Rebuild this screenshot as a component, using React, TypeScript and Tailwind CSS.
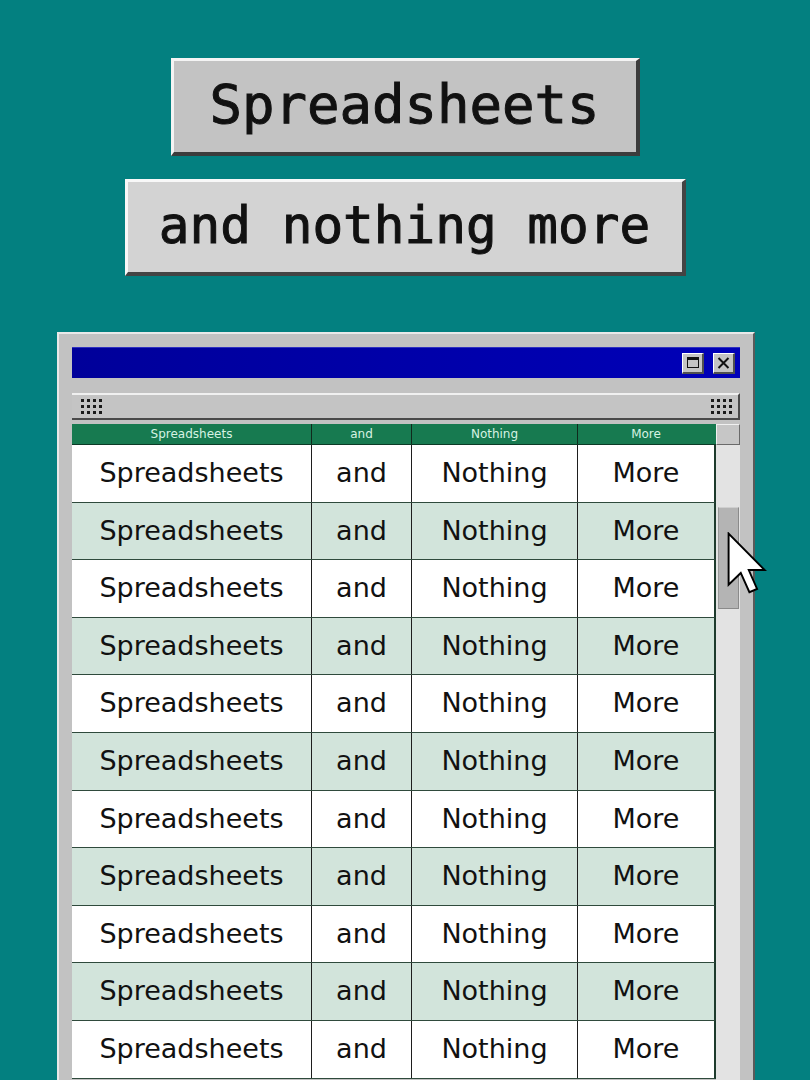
import React from "react";

const COLS = [
  { label: "Spreadsheets", w: "w-[240px]" },
  { label: "and", w: "w-[100px]" },
  { label: "Nothing", w: "w-[166px]" },
  { label: "More", w: "w-[136px]" },
];

const ROWS = Array.from({ length: 11 }, (_, i) => i);

function Grip() {
  return (
    <div className="grid grid-cols-4 gap-x-[3px] gap-y-[3px]">
      {Array.from({ length: 12 }, (_, i) => (
        <div key={i} className="w-[3px] h-[3px] bg-[#1a1a1a]" />
      ))}
    </div>
  );
}

function TitleButton({ children }: { children: React.ReactNode }) {
  return (
    <div className="w-[22px] h-[21px] bg-[#c4c4c4] border-t border-l border-t-white border-l-white border-r-2 border-b-2 border-r-[#505050] border-b-[#505050] flex items-center justify-center">
      {children}
    </div>
  );
}

function Cursor() {
  return (
    <svg
      className="absolute left-[727px] top-[532px]"
      width="40"
      height="64"
      viewBox="0 0 12.5 20"
    >
      <path
        d="M0.5 0.5 L0.5 16.5 L4.3 12.8 L7 18.8 L9.4 17.8 L6.8 11.9 L11.8 11.9 Z"
        fill="#ffffff"
        stroke="#000000"
        strokeWidth="0.6"
        strokeLinejoin="miter"
      />
    </svg>
  );
}

export default function App() {
  return (
    <div className="relative w-[810px] h-[1080px] overflow-hidden bg-[#038080] flex flex-col items-center">
      {/* heading buttons */}
      <div className="mt-[58px] w-[469px] h-[98px] bg-[#c3c3c3] border-t-[3px] border-l-[3px] border-t-[#f4f4f4] border-l-[#f4f4f4] border-r-[4px] border-b-[4px] border-r-[#3c3c3c] border-b-[#3c3c3c] flex items-center justify-center">
        <span className="font-['DejaVu_Sans_Mono',monospace] text-[54px] leading-none text-[#111] [-webkit-text-stroke:1px_#111] -mt-[4px]">
          Spreadsheets
        </span>
      </div>
      <div className="mt-[23px] w-[561px] h-[97px] bg-[#d3d3d3] border-t-[3px] border-l-[3px] border-t-[#f8f8f8] border-l-[#f8f8f8] border-r-[4px] border-b-[4px] border-r-[#444] border-b-[#444] flex items-center justify-center">
        <span className="font-['DejaVu_Sans_Mono',monospace] text-[51px] leading-none text-[#111] [-webkit-text-stroke:1px_#111] -mt-[4px]">
          and nothing more
        </span>
      </div>

      {/* spreadsheet window */}
      <div className="mt-[56px] self-start ml-[57px] w-[698px] flex-1 bg-[#c2c2c2] border-t-2 border-l-2 border-t-[#e9e9e9] border-l-[#e9e9e9] border-r-2 border-r-[#5a5a5a] pt-[13px] pl-[13px] pr-[13px] flex flex-col">
        {/* title bar */}
        <div className="h-[31px] bg-gradient-to-r from-[#00009a] to-[#0000b8] flex items-center justify-end gap-[9px] pr-[5px] border-t border-t-[#3030c0]">
          <TitleButton>
            <div className="w-[12px] h-[11px] border border-[#111] border-t-[3px]" />
          </TitleButton>
          <TitleButton>
            <svg width="13" height="12" viewBox="0 0 13 12">
              <path d="M1.5 1 L11.5 11 M11.5 1 L1.5 11" stroke="#111" strokeWidth="2" />
            </svg>
          </TitleButton>
        </div>

        {/* toolbar */}
        <div className="mt-[15px] h-[27px] bg-[#c4c4c4] border-t-2 border-t-[#f0f0f0] border-b-2 border-b-[#4a4a4a] border-r-2 border-r-[#4a4a4a] flex items-center justify-between pl-[9px] pr-[6px]">
          <Grip />
          <Grip />
        </div>

        {/* sheet */}
        <div className="mt-[4px] flex-1 flex">
          <div className="flex flex-col">
            <div className="h-[21px] flex bg-[#177a50] border-b border-b-[#0c3a26]">
              {COLS.map((c, i) => (
                <div
                  key={c.label}
                  className={`${c.w} flex items-center justify-center font-['DejaVu_Sans',sans-serif] text-[12px] text-[#d6f2e2] ${
                    i < 3 ? "border-r border-r-[#102a1c]" : ""
                  }`}
                >
                  {c.label}
                </div>
              ))}
            </div>
            {ROWS.map((r) => (
              <div
                key={r}
                className={`h-[57.6px] shrink-0 flex border-b border-b-[#2f4a3c] border-r-2 border-r-[#1d3a2c] ${
                  r % 2 === 0 ? "bg-white" : "bg-[#d2e4db]"
                }`}
              >
                {COLS.map((c, i) => (
                  <div
                    key={c.label}
                    className={`${c.w} flex items-center justify-center font-['DejaVu_Sans',sans-serif] text-[27px] text-[#111] ${
                      i < 3 ? "border-r border-r-[#1e1e1e]" : ""
                    } ${i === 3 ? "w-[134px]" : ""}`}
                  >
                    {c.label}
                  </div>
                ))}
              </div>
            ))}
          </div>

          {/* vertical scroll bar */}
          <div className="w-[27px] flex flex-col">
            <div className="h-[21px] bg-[#c6c6c6] border-t border-l border-t-[#f0f0f0] border-l-[#f0f0f0] border-r border-b border-r-[#6a6a6a] border-b-[#6a6a6a]" />
            <div className="flex-1 bg-[#e3e3e3] pt-[62px] pl-[2px] pr-[1px]">
              <div className="h-[102px] bg-[#b4b4b4] border-l border-t border-l-[#9a9a9a] border-t-[#cfcfcf] border-r border-b border-r-[#8a8a8a] border-b-[#8a8a8a]" />
            </div>
          </div>
        </div>
      </div>

      <Cursor />
    </div>
  );
}
